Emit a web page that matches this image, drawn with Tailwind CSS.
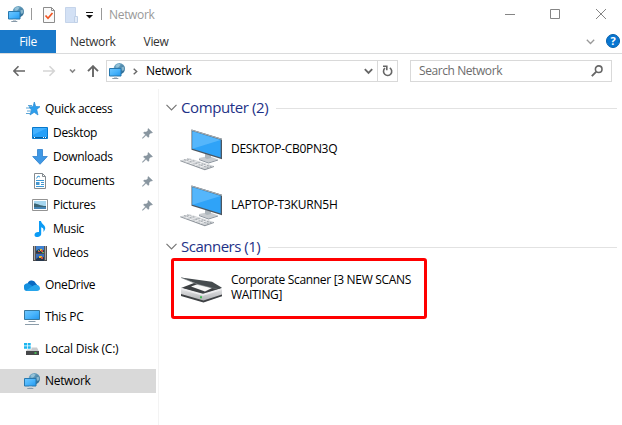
<!DOCTYPE html>
<html lang="en">
<head>
<meta charset="utf-8">
<title>Network</title>
<script src="https://cdn.jsdelivr.net/npm/@tailwindcss/browser@4"></script>
</head>
<body class="w-[622px] h-[425px] overflow-hidden bg-white text-black text-[12px] leading-4 tracking-[-0.32px] font-['Open_Sans','Noto_Sans',sans-serif]">
<svg class="absolute w-0 h-0">
  <defs>
    <linearGradient id="scr" x1="0" y1="0" x2="1" y2="1"><stop offset="0" stop-color="#70c7ff"/><stop offset=".5" stop-color="#4ab5fc"/><stop offset="1" stop-color="#2196ee"/></linearGradient>
    <linearGradient id="globe" x1="0" y1="0" x2="1" y2="1"><stop offset="0" stop-color="#84b9d4"/><stop offset="1" stop-color="#205f88"/></linearGradient>
    <linearGradient id="body" x1="0" y1="0" x2="0" y2="1"><stop offset="0" stop-color="#e8e8ea"/><stop offset="1" stop-color="#a9abae"/></linearGradient>
    <symbol id="net" viewBox="0 0 16 16">
      <circle cx="10.3" cy="5.7" r="5.7" fill="url(#globe)"/>
      <path d="M7 2.3 9.6.8 11.5 1.6 10 4 7.5 5ZM12.500 4.500 14.500 3.500 15.500 6 14 8 12.500 7Z" fill="#b5dbea" opacity=".6"/>
      <path d="M.5 5.500h11.500v7.500H.5Z" fill="url(#scr)" stroke="#2878ae"/>
      <path d="M5 13.500h3v1.500H5z" fill="#c3cdd5"/><path d="M3.300 15.500h6" stroke="#8799a8"/>
    </symbol>
    <symbol id="pin" viewBox="0 0 11 11">
      <path d="M6.3.4 10.6 4.6 9.5 5.1 8.8 4.9 7 6.8 7 8.7 6.2 9.5 4 7.3.8 10.5.3 10.1 3.4 6.8 1.4 4.8 2.3 4 4.3 4 6.1 2.2 5.8 1.2Z" fill="#8996a0" stroke="#8996a0" stroke-width=".4"/>
    </symbol>
    <symbol id="pc" viewBox="0 0 44 42">
      <path d="M19 29 29 27 38 30.500 28.5 33.500 19 30Z" fill="#c8ccd0"/><path d="M19 30 28.5 33.500 38 30.500v1L28.5 34.500 19 31Z" fill="#87909a"/>
      <path d="M25 25h6v4l-4 1-2-1Z" fill="#aeb6bc"/>
      <path d="M11.500.5 42 9.700V30.200L11.500 20.700Z" fill="#4c5660"/>
      <path d="M11.500.5 42 9.700V11L11.500 1.800Z" fill="#a3adb4"/>
      <path d="M12.400 2.200 40.700 11V28.500L12.400 19.800Z" fill="#2fa3f8"/>
      <path d="M12.400 2.200 40.700 11 12.400 19.800Z" fill="#55b6fb"/>
      <path d="M.3 31.300 9.500 29.200 34 37 24.800 40Z" fill="#d3d6d9"/>
      <path d="M.3 31.300 24.800 40 34 37v1L24.800 41.200.3 32.300Z" fill="#8e949b"/>
      <path d="M4 30.500 28.500 38.700M7 29.800 31.500 37.800" stroke="#989da3" stroke-width=".8" stroke-dasharray="2 1"/>
      <path d="M5.500 33 13 30.500M10 34.700 17.500 32M15 36.300 22.500 33.800M20 38 27.500 35.500" stroke="#f8f8f9" stroke-width=".8"/>
    </symbol>
    <symbol id="film" viewBox="0 0 14 15">
      <path d="M0 0h14v15H0z" fill="#4c4c4e"/><path d="M3 0h8v7H3z" fill="#3f81d0"/><path d="M3 8h8v7H3z" fill="#386ebc"/>
      <path d="M1.5.5v14M12.5.5v14" stroke="#fff" stroke-width="1.2" stroke-dasharray="1 1"/>
      <path d="M3 5 6 3l2 2 3-1v3H3ZM3 13l3-2 2 1 3-1v4H3Z" fill="#26384e"/><path d="M7 3h2v2H7zM6 10h3v2H6z" fill="#eebb31"/><path d="M8 4h2v2H8zM5 5h2v1H5zM8 11h2v2H8z" fill="#cf5241"/><path d="M5 4h1v1H5zM9 6h2v1H9z" fill="#6eb45c"/>
    </symbol>
  </defs>
</svg>

<div class="flex flex-col h-full">
  <header class="flex items-center h-[30px] shrink-0">
    <svg class="ml-2 -mt-[2px] w-4 h-4"><use href="#net"/></svg>
    <div class="ml-[7px] -mt-[2px] w-px h-3 bg-[#999]"></div>
    <svg class="ml-[11px] w-3 h-4" viewBox="0 0 12 16"><path d="M.5.5h8l3 3v12H.5Z" fill="#fafafa" stroke="#8c8c8c"/><path d="M8.5.5v3h3" fill="none" stroke="#8c8c8c"/><path d="M2.5 8.5 5 11.3 9.5 6" fill="none" stroke="#f05523" stroke-width="1.7"/></svg>
    <svg class="ml-[10px] w-[13px] h-4" viewBox="0 0 13 16"><path d="M.5.5h10v15H.5Z" fill="#d3e1f5" stroke="#c5d4ea"/><path d="M9.5 9.5h3v6h-3Z" fill="#e1ebf8" stroke="#c0d0e7"/></svg>
    <svg class="ml-2 mt-[1px] w-[7px] h-[7px]" viewBox="0 0 7 7"><path d="M0 .5h7" stroke="#111"/><path d="M0 3h7L3.5 6.5Z" fill="#111"/></svg>
    <div class="ml-[8px] -mt-[2px] w-px h-3 bg-[#999]"></div>
    <span class="ml-[7px] text-[#999]">Network</span>
    <svg class="ml-auto mr-[14px] -mt-[2px] w-[104px] h-[12px]" viewBox="0 0 104 12" fill="none" stroke="#858585"><path d="M1 6.500h10M46.500 1.500h9v9h-9Z"/><path d="M92 1 102 11M102 1 92 11"/></svg>
  </header>

  <nav class="flex items-center h-6 shrink-0 border-b border-[#dadbdc] text-[#333]">
    <div class="w-14 h-[23px] bg-[#1979ca] text-white flex items-center justify-center"><span>File</span></div>
    <span class="ml-[14px]">Network</span>
    <span class="ml-[28px]">View</span>
    <svg class="ml-auto w-[9px] h-[6px]" viewBox="0 0 9 6"><path d="M.8.8 4.500 4.500 8.200.8" fill="none" stroke="#999" stroke-width="1.3"/></svg>
    <div class="ml-[11px] mr-[2px] -mt-px w-[14px] h-[14px] rounded-full bg-[#0876d1] border border-[#0560ad] text-white text-[11px] font-bold leading-3 text-center">?</div>
  </nav>

  <div class="flex items-center h-[35px] shrink-0 text-[#222]">
    <svg class="ml-[13px] -mt-px w-[86px] h-3" viewBox="0 0 86 12" fill="none" stroke-width="1.6"><path d="M.8 6H12M5.500 1.200.8 6l4.700 4.800" stroke="#666"/><path d="M30 6h11.500M36.500 1.200 41.300 6l-4.800 4.800" stroke="#d5d5d5"/><path d="M57 4.500 59.500 7 62 4.500" stroke="#858585"/><path d="M80 12V1.500M75 6.200 80 1.200 85 6.200" stroke="#666" stroke-width="1.9"/></svg>
    <div class="ml-[7px] -mt-px w-[292px] h-[22px] border border-[#d9d9d9] flex items-center">
      <svg class="ml-[2px] -mt-px w-4 h-4"><use href="#net"/></svg>
      <svg class="ml-[8px] w-[5px] h-[7px]" viewBox="0 0 5 7"><path d="M.7.7 3.700 3.500.7 6.300" fill="none" stroke="#666" stroke-width="1.4"/></svg>
      <span class="ml-[8px] -mt-px text-black">Network</span>
      <svg class="ml-auto w-[9px] h-[7px]" viewBox="0 0 9 7"><path d="M.8 1.200 4.500 5 8.200 1.200" fill="none" stroke="#666" stroke-width="1.8"/></svg>
      <div class="ml-[4px] w-[20px] h-5 border-l border-[#d9d9d9] flex items-center justify-center"><svg class="w-[11px] h-3" viewBox="0 0 11 12" fill="none" stroke="#666" stroke-width="1.6"><path d="M7.800 2.900A4.100 4.100 0 1 1 3 3.200M1 1.300h3.800v4"/></svg></div>
    </div>
    <div class="ml-3 -mt-px w-[202px] h-[22px] border border-[#d9d9d9] flex items-center text-[#6d6d6d]">
      <span class="ml-2 tracking-[-0.42px]">Search Network</span>
      <svg class="ml-auto mr-2 w-3 h-3" viewBox="0 0 12 12" fill="none" stroke="#666" stroke-width="1.6"><circle cx="7.700" cy="4.200" r="3.300"/><path d="M5.300 6.700.8 11.200" stroke-width="1.900"/></svg>
    </div>
  </div>

  <div class="flex flex-1 min-h-0">
    <aside class="w-[159px] shrink-0 border-r border-[#f3f3f3] pt-2">
      <div class="h-6 flex items-center pl-[26px]">
        <svg class="w-[14px] h-[14px]" viewBox="0 0 14 14"><path d="M8.300 0 9.700 4.500 14 4.700 10.700 7.500 12 13 8.200 10.300 4 13 5.500 8 3 4.700h4Z" fill="#2d9fed" stroke="#2788d1" stroke-width=".7"/><path d="M2 3.500h4M0 6h4M1 9h4M0 11.500h4" stroke="#4b9cd2" stroke-width=".9"/></svg>
        <span class="ml-[5px]">Quick access</span>
      </div>
      <div class="h-6 flex items-center pl-8">
        <svg class="w-4 h-3" viewBox="0 0 16 12"><path d="M.5.5h15v11H.5Z" fill="#25a0f9" stroke="#0878cb"/><path d="M1 1h14L1 8Z" fill="#43b1ff"/><path d="M1 10.500h14" stroke="#075f9f"/><path d="M2 10.500h1M11 10.500h3" stroke="#fff" stroke-dasharray="1 1"/></svg>
        <span class="ml-[5px]">Desktop</span><svg class="ml-auto mr-[5px] w-[11px] h-[11px]"><use href="#pin"/></svg>
      </div>
      <div class="h-6 flex items-center pl-8">
        <svg class="w-4 h-4" viewBox="0 0 16 16"><path d="M5.500.5h5v7h4.800L8 15.300.7 7.500h4.800Z" fill="#3f98e5" stroke="#2d7fcb" stroke-width=".8"/></svg>
        <span class="ml-[5px]">Downloads</span><svg class="ml-auto mr-[5px] w-[11px] h-[11px]"><use href="#pin"/></svg>
      </div>
      <div class="h-6 flex items-center pl-8">
        <svg class="w-4 h-4" viewBox="0 0 16 16"><path d="M2.500.5h8l3 3v12h-11Z" fill="#fff" stroke="#858b90"/><path d="M10.500.5v3h3" fill="none" stroke="#858b90"/><path d="M4.500 5.500 6 3l2 1M4 7.500h8M4 13.500h8" fill="none" stroke="#3998d6"/><path d="M4 9h3.500v3H4zM9 9h3v1H9zM9 11h3v1H9z" fill="#4596ce"/></svg>
        <span class="ml-[5px]">Documents</span><svg class="ml-auto mr-[5px] w-[11px] h-[11px]"><use href="#pin"/></svg>
      </div>
      <div class="h-6 flex items-center pl-8">
        <svg class="w-4 h-3" viewBox="0 0 16 12"><path d="M.5.5h15v11H.5Z" fill="#fff" stroke="#939393"/><path d="M2 2h12v8H2z" fill="#a6d6ef"/><path d="M2 4.500c4 0 6 2.500 12 2.500v1H2Z" fill="#3c6574"/><path d="M2 8h12v2H2z" fill="#4685b5"/></svg>
        <span class="ml-[5px]">Pictures</span><svg class="ml-auto mr-[5px] w-[11px] h-[11px]"><use href="#pin"/></svg>
      </div>
      <div class="h-6 flex items-center pl-8">
        <svg class="w-4 h-4" viewBox="0 0 16 16"><path d="M7 0h2c.3 3 4.700 4 4.200 7.500-.2 1.500-1 2.500-2 3.500.8-3 .2-4-2-4.800V13c0 3.300-6.700 4.300-6.700 1 0-2.200 2.300-3.500 4.500-3Z" fill="#0b9bf5"/></svg>
        <span class="ml-[5px]">Music</span>
      </div>
      <div class="h-6 flex items-center pl-8">
        <svg class="ml-px w-[14px] h-[15px]"><use href="#film"/></svg>
        <span class="ml-[6px]">Videos</span>
      </div>
      <div class="mt-2 h-6 flex items-center pl-6">
        <svg class="w-4 h-[11px]" viewBox="0 0 16 11"><path d="M3.500 4A4.400 4.400 0 0 1 11.800 3.200L14 6 8 9 1 8Z" fill="#0869c2"/><path d="M0 8A3.500 3.500 0 0 1 5.500 4.100L11 8l-8 3A3 3 0 0 1 0 8Z" fill="#1590df"/><path d="M2 10.500 9.500 5.500C11 4 16 5 16 8.200c0 1.700-1.200 2.800-3 2.800H3.500Z" fill="#27a5eb"/></svg>
        <span class="ml-[5px]">OneDrive</span>
      </div>
      <div class="mt-2 h-6 flex items-center pl-6">
        <svg class="w-4 h-4" viewBox="0 0 16 16"><path d="M.5 1.500h15v9H.5Z" fill="url(#scr)" stroke="#38799f"/><path d="M4.500 12.500h7M1 15.500h14" stroke="#8c9daa"/></svg>
        <span class="ml-[5px]">This PC</span>
      </div>
      <div class="mt-2 h-6 flex items-center pl-6">
        <svg class="w-4 h-[14px]" viewBox="0 0 16 14"><path d="M0 1h3v2.500H0zM3.700 1h3v2.500h-3zM0 4.200h3v2.500H0zM3.700 4.200h3v2.500h-3z" fill="#1bb5ef"/><path d="M7.500 5.500H13l2 4H2l1-2h4.500Z" fill="#c9cbce"/><path d="M2 9h13v4H2z" fill="#46484a"/><path d="M10.500 11h2" stroke="#48e05a" stroke-width="1.400"/></svg>
        <span class="ml-[5px] tracking-[-0.22px]">Local Disk (C:)</span>
      </div>
      <div class="mt-2 h-6 w-[156px] flex items-center pl-6 bg-[#d9d9d9]">
        <svg class="w-4 h-4"><use href="#net"/></svg>
        <span class="ml-[5px]">Network</span>
      </div>
    </aside>

    <main class="flex-1 min-w-0 pl-[6px] pt-2">
      <div class="flex items-center h-5 pr-[5px] text-[15px] leading-5 tracking-[-0.4px] text-[#1e3287]">
        <svg class="ml-px w-[11px] h-[7px]" viewBox="0 0 11 7"><path d="M.5.8 5.500 5.800 10.500.8" fill="none" stroke="#777" stroke-width="1.200"/></svg>
        <span class="ml-1 w-[95px] whitespace-nowrap">Computer (2)</span>
        <div class="flex-1 mt-[2px] h-px bg-[#e2e2e2]"></div>
      </div>
      <div class="flex items-center h-14 mt-[4px] pl-[15px]"><svg class="mt-[2px] w-[44px] h-[42px]"><use href="#pc"/></svg><span class="ml-[7px]">DESKTOP-CB0PN3Q</span></div>
      <div class="flex items-center h-14 pl-[15px]"><svg class="mt-[2px] w-[44px] h-[42px]"><use href="#pc"/></svg><span class="ml-[7px] tracking-[-0.22px]">LAPTOP-T3KURN5H</span></div>
      <div class="flex items-center h-5 mt-[3px] pr-[5px] text-[15px] leading-5 tracking-[-0.5px] text-[#1e3287]">
        <svg class="ml-px w-[11px] h-[7px]" viewBox="0 0 11 7"><path d="M.5.8 5.500 5.800 10.500.8" fill="none" stroke="#777" stroke-width="1.200"/></svg>
        <span class="ml-1 w-[87px] whitespace-nowrap">Scanners (1)</span>
        <div class="flex-1 mt-[2px] h-px bg-[#e2e2e2]"></div>
      </div>
      <div class="ml-[6px] mt-[2px] w-[256px] h-[61px] border-3 border-[#ff0000] rounded-[3px] flex items-center pl-[6px]">
        <svg class="mt-[2px] w-[43px] h-[27px]" viewBox="0 0 43 27">
          <path d="M1 12 14 7 42 12.500 23 19.500Z" fill="#3d4043"/>
          <path d="M11 10.500 18 8 33 11.500 25 15.500Z" fill="#f7f7f7"/>
          <path d="M1 12 23 18.500 42 12.500v7L23.500 26 1 19Z" fill="url(#body)"/>
          <path d="M1 11.800 23 17.800 42 12V14L23 19.800 1 13.500Z" fill="#ececee"/>
          <path d="M1 18 23.500 24.500 42 18.500V20.200L23.500 26.500 1 20Z" fill="#3e4144"/>
          <path d="M1 1.500 32 5.700 42 11.800 36.500 13.200 18 8.300Z" fill="#454b4e"/><path d="M1 1.500 18 8.500 37 13" fill="none" stroke="#6c7275" stroke-width=".6"/>
          <path d="M20 21.200h2" stroke="#41ba55" stroke-width="2"/>
        </svg>
        <div class="ml-[8px] -mt-[3px] leading-[15px] tracking-[-0.32px] whitespace-nowrap"><p>Corporate Scanner [3 NEW SCANS</p><p>WAITING]</p></div>
      </div>
    </main>
  </div>
</div>
</body>
</html>
